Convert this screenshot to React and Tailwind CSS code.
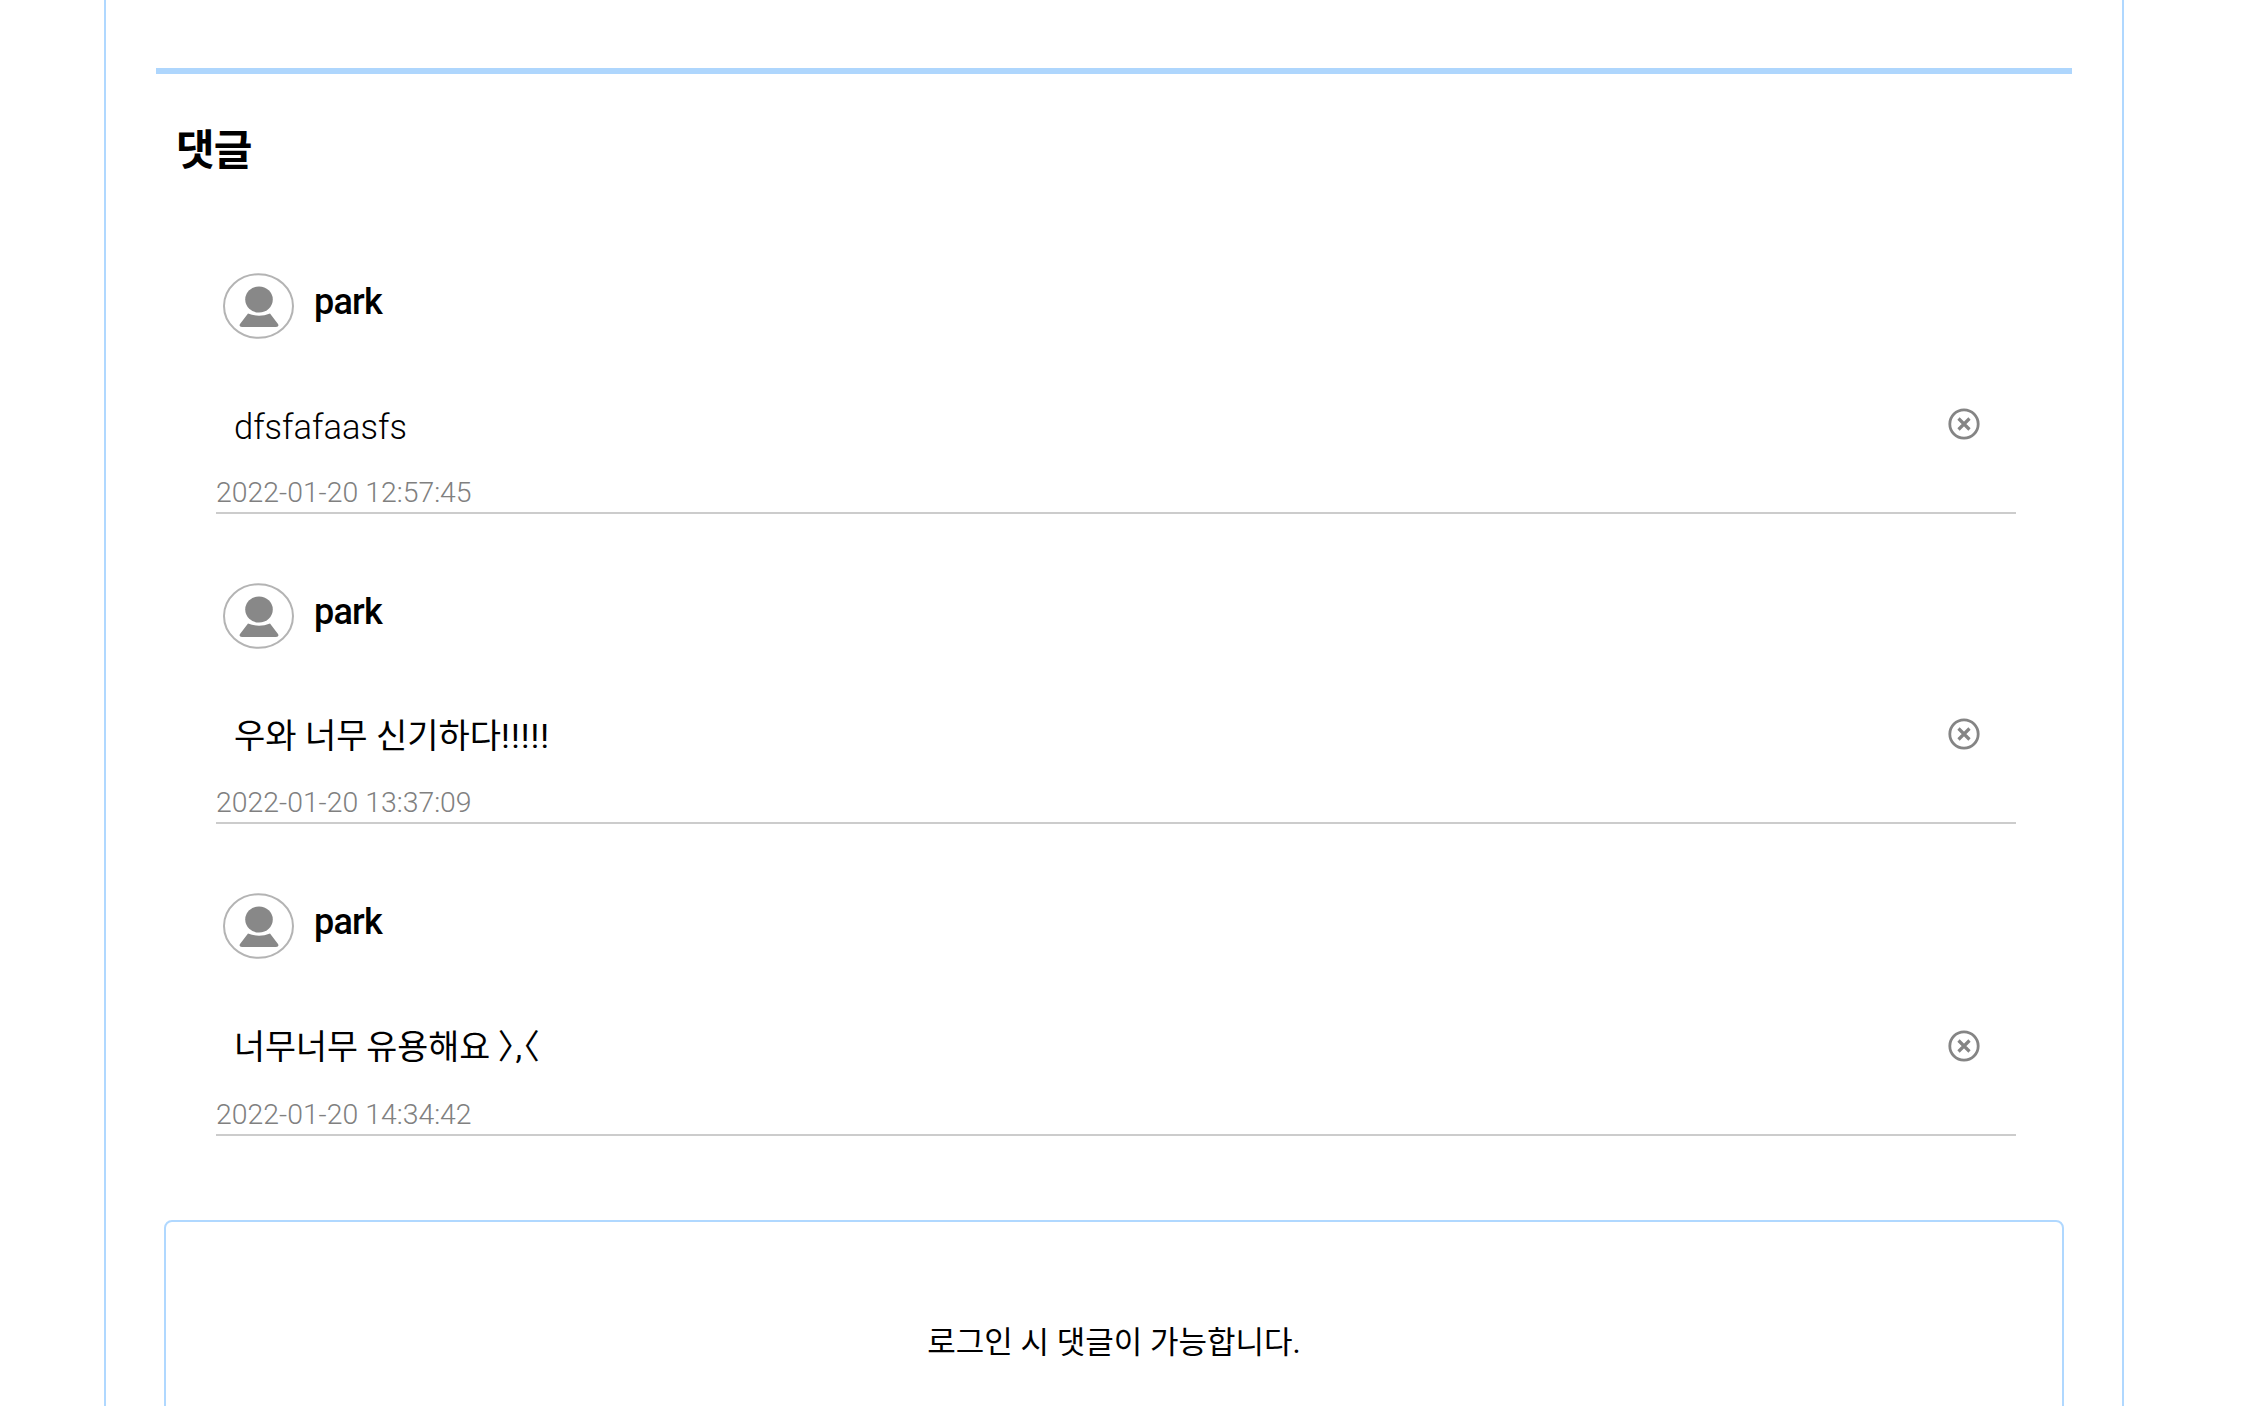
const font = { fontFamily: 'Roboto, "Noto Sans CJK KR", sans-serif' };

function Avatar() {
  return (
    <svg width="72" height="66" viewBox="0 0 72 66" className="shrink-0">
      <ellipse cx="35.5" cy="33" rx="34.5" ry="31.8" fill="#fff" stroke="#b4b4b4" strokeWidth="2" />
      <ellipse cx="36" cy="26.5" rx="13.8" ry="13" fill="#888" />
      <path d="M25 40.5 Q36 45 47 40.5 L55 51 Q56.5 54 53 54 L19 54 Q15.5 54 17 51 Z" fill="#888" />
    </svg>
  );
}

function CloseIcon() {
  return (
    <svg width="32" height="32" viewBox="0 0 32 32" fill="none" stroke="#858585" className="shrink-0">
      <circle cx="16" cy="16" r="14.2" strokeWidth="2.8" />
      <path d="M10.5 10.5 L21.5 21.5 M21.5 10.5 L10.5 21.5" strokeWidth="3.2" />
    </svg>
  );
}

function Comment({ text, date, h, rowMt, textCls }) {
  return (
    <div className={`flex flex-col ${h} ml-[110px] w-[1800px]`}>
      <div className="flex items-center pl-[7px] h-[66px] gap-[19px] shrink-0">
        <Avatar />
        <span className="text-[36px] leading-[54px] font-medium text-black -mt-[8px] tracking-[-0.8px]">park</span>
      </div>
      <div className={`flex items-center justify-between pl-[18px] pr-[36px] ${rowMt} h-[62px]`}>
        <span className={`${textCls} leading-[50px] text-black`}>{text}</span>
        <CloseIcon />
      </div>
      <div className="text-[28.4px] leading-[36px] font-light text-[#808080] mt-[20px]">{date}</div>
      <div className="h-[2px] bg-[#cccccc] mt-[1px]" />
    </div>
  );
}

export default function App() {
  return (
    <div className="h-[1406px] overflow-hidden bg-white" style={font}>
      <div className="ml-[104px] w-[2020px] h-[1406px] border-x-2 border-[#b0d8ff] pt-[68px]">
        <div className="ml-[50px] w-[1916px] h-[6px] bg-[#aed6fd]" />
        <h2 className="ml-[70px] mt-[47px] text-[42px] leading-[60px] font-bold text-black tracking-[-1px]">댓글</h2>
        <div className="mt-[92px]">
          <Comment text="dfsfafaasfs" date="2022-01-20 12:57:45" h="h-[310px]" rowMt="mt-[54px]" textCls="text-[34.5px] font-light pt-[5px]" />
          <Comment
            text={<>우와 너무 신기하다<span className="tracking-[1px]">!!!!!</span></>}
            date="2022-01-20 13:37:09"
            h="h-[310px]"
            rowMt="mt-[54px]"
            textCls="text-[34px] font-normal pt-[3px]"
          />
          <Comment
            text={<>너무너무 유용해요 <span className="[font-feature-settings:'palt']">〉,〈</span></>}
            date="2022-01-20 14:34:42"
            h="h-[312px]"
            rowMt="mt-[56px]"
            textCls="text-[33.7px] font-normal pt-[3px]"
          />
        </div>
        <div className="ml-[58px] w-[1900px] mt-[15px] h-[300px] border-2 border-[#b0d8ff] rounded-lg pt-[97px] text-center">
          <span className="text-[31px] leading-[48px] font-normal text-black">로그인 시 댓글이 가능합니다.</span>
        </div>
      </div>
    </div>
  );
}
